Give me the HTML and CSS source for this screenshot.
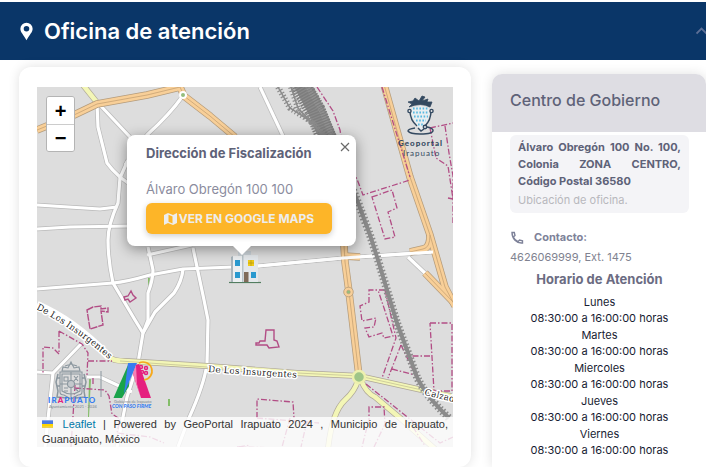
FILE: index.html
```html
<!DOCTYPE html>
<html lang="es">
<head>
<meta charset="utf-8">
<meta name="viewport" content="width=device-width, initial-scale=1">
<title>Oficina de atención</title>
<link rel="stylesheet" href="styles.css">
</head>
<body>
<button class="section-head" type="button" aria-expanded="true">
  <svg class="pin" viewBox="0 0 14 19" aria-hidden="true"><path fill="#fff" fill-rule="evenodd" d="M7 0a6.600 6.600 0 0 0-6.600 6.600C.4 10.400 3.600 12.600 7 19c3.400-6.400 6.600-8.600 6.600-12.400A6.600 6.600 0 0 0 7 0zM7 3.600a3 3 0 1 1 0 6 3 3 0 0 1 0-6z"/></svg>
  <span class="section-title">Oficina de atención</span>
  <svg class="chevron" viewBox="0 0 10 8" aria-hidden="true"><path d="M0.500 6.500L5.500 1.500L10.500 6.500" fill="none" stroke="#5d6f96" stroke-width="1.800"/></svg>
</button>
<main class="layout">
  <section class="map-card">
    <div class="map">
      <svg class="tiles" viewBox="37 87 416 360" preserveAspectRatio="xMidYMid slice" aria-label="Mapa de Irapuato">
        <defs>
          <path id="insurgentes-west" d="M36 309Q72 327 111 361"/>
          <path id="insurgentes" d="M208 372L300 378"/>
          <path id="calzada" d="M424 395L462 404"/>
          <g id="white-roads" fill="none" stroke-linejoin="round">
            <path d="M37 205L100 209L117 207"/>
            <path d="M37 229L70 227L130 226"/>
            <path d="M37 289L113 283Q126 282 150 275L183 269L233 267L258 266L343 258L433 252"/>
            <path d="M97 104L98 127L107 163Q112 170 120 177L128 183"/>
            <path d="M128 160L120 178L118 203Q108 225 108 240Q108 260 113 283L135 320L143 333"/>
            <path d="M99 104L130 137"/>
            <path d="M182 97Q170 114 147 135L125 165"/>
            <path d="M148 247L153 270Q153 280 148 293L148 320L143 333L138 363L127 397L117 447"/>
            <path d="M183 269Q182 281 174 293L155 312L143 333"/>
            <path d="M193 248L204 300L208 320L207 364Q204 385 189 418L178 447"/>
            <path d="M147 255L192 245"/>
            <path d="M37 372L53 373L82 343"/>
            <path d="M53 373L45 447"/>
            <path d="M87 377H100L132 392"/>
            <path d="M260 87L283 136"/>
            <path d="M408 257L426 274"/>
          </g>
          <g id="orange-roads" fill="none" stroke-linejoin="round">
            <path d="M37 130L74 115L97 104L147 95L180 87L184 96L210 116L235 137"/>
            <path d="M344 245L345 262L349 292L359 376"/>
            <path d="M344 256L360 257"/>
            <path d="M383 81L410 177L430 235L445 287L455 306"/>
            <path d="M430 235Q430 248 423 249L410 252"/>
            <path d="M425 273L455 304"/>
          </g>
          <g id="yellow-roads" fill="none">
            <path d="M83 85L99 105"/>
            <path d="M109 357Q113 361 125 361L207 366L297 373L359 376L422 390L455 397"/>
            <path d="M358 380Q355 391 345 400Q332 412 328 449"/>
            <path d="M361 380Q366 393 375 397L400 418L435 449"/>
          </g>
          <path id="railway" d="M349 180L359 205L370 235L378 260L397 323L417 377Q425 395 449 418"/>
        </defs>
        <path fill="#dddddd" d="M37 87h416v360H37z"/>
        <path d="M148 278h3l-1 14h-2zM89 379h2l-2 38h-1zM168 399h2v7h-2z" fill="#83bd68"/>
        <g stroke="#b9b9b9" stroke-width="4.600"><use href="#white-roads"/></g>
        <g stroke="#ffffff" stroke-width="3.200"><use href="#white-roads"/></g>
        <path d="M37 305Q73 320 109 357" fill="none" stroke="#fff" stroke-width="8"/>
        <g stroke="#aea798" stroke-width="6"><use href="#yellow-roads"/></g>
        <g stroke="#f3f6b6" stroke-width="4.600"><use href="#yellow-roads"/></g>
        <path d="M120 361L207 367L297 373L359 376L422 390" fill="none" stroke="#c5c395" stroke-width=".8"/>
        <g stroke="#b59c7b" stroke-width="7.500"><use href="#orange-roads"/></g>
        <g stroke="#f8cf98" stroke-width="6"><use href="#orange-roads"/></g>
        <g stroke="#c6a273" stroke-width=".8"><use href="#orange-roads"/></g>
        <path d="M258 266L343 258L433 252" fill="none" stroke="#fff" stroke-width="3"/>
        <circle cx="348.500" cy="292" r="4.800" fill="#f8cf98" stroke="#b59c7b" stroke-width=".8"/>
        <circle cx="348.500" cy="292" r="1.800" fill="#94be7d" stroke="#b59c7b" stroke-width=".6"/>
        <circle cx="183" cy="95" r="3" fill="#94be7d" stroke="#fff" stroke-width="2"/>
        <circle cx="359" cy="377" r="6" fill="#9fc588" stroke="#edf0ae" stroke-width="2.500"/>
        <g fill="none" stroke="#b24d85" stroke-width="1.300" stroke-dasharray="6 2 1.500 2">
          <path d="M317 87L333 111L340 130L345 160L357 179L363 195L410 180"/>
          <path d="M382 87L410 177"/>
          <path d="M372 197L392 190L397 208L388 212L395 237L385 239Z"/>
          <path d="M430 128L453 123M445 126L449 153L453 176L453 223M430 128L436 158L448 166L453 199M448 198L453 199"/>
          <path d="M385 290H369V302L360 306L362 321L376 318L374 327L365 328L369 337L382 333L384 338L393 336L385 311L378 290"/>
          <path d="M385 290L396 338L382 378M401 345L388 378M401 345L415 374M392 369L415 375M430 356H412M430 323H452V391H434L430 323"/>
          <path d="M257 418V399L293 402L294 418M257 418L319 423M237 447L282 448M290 418L282 447M307 421L301 447"/>
          <path d="M366 384L440 443L453 437M369 424V407H384L385 424L374 447M367 427L362 447M413 427L425 446"/>
          <path d="M59 331V354L53 348L43 347V373M59 331L82 344L88 353L87 375M88 361L112 361M75 388L105 390L109 396L112 414L120 419L117 433L150 437L164 443M75 385L71 447M93 378V386M239 447L250 445"/>
        </g>
        <g fill="none" stroke="#b24d85" stroke-width="1.400">
          <path d="M87 310L93 307L101 306V309L108 308V312L101 311L103 325L90 329Z" stroke-dasharray="7 1"/>
          <path d="M256 343H259L260 341H265L266 330H274V340L277 341L279 347L269 348L267 345H256Z"/>
          <path d="M124 297L128 296L131 291L133 295L136 298L130 302L128 299L125 300Z"/>
        </g>
        <g fill="none" stroke="#8b8b8b">
          <path d="M302 84L316 110L330 142" stroke-width="17"/>
          <path d="M300 84L315 110L328 142" stroke="#7d7d7d" stroke-width="21" stroke-dasharray="1.500 1.200"/>
          <path d="M306 84L322 112L334 142" stroke="#939393" stroke-width="5" stroke-dasharray="1 1.500"/>
          <path d="M278 87L290 108L312 122L326 140M291 87L298 108L325 137" stroke-width="1.500"/>
          <path d="M278 87L290 108L312 122L326 140M291 87L298 108L325 137" stroke-width="6" stroke-dasharray="1.200 2.200"/>
          <use href="#railway" stroke-width="4"/>
          <use href="#railway" stroke-width="8" stroke-dasharray="1.500 2.200"/>
        </g>
        <g class="street">
          <text><textPath href="#insurgentes-west">De Los Insurgentes</textPath></text>
          <text><textPath href="#insurgentes">De Los Insurgentes</textPath></text>
          <text><textPath href="#calzada">Calzad</textPath></text>
        </g>
        <!-- office building marker -->
        <g>
          <path d="M229 282.500h32" stroke="#527d60" stroke-width="1.200"/>
          <path d="M231 257l2-1v26h-2z" fill="#a9b5bc"/>
          <path d="M233 256h9v26h-9z" fill="#eceff1"/>
          <path d="M238 251h13v5h-13z" fill="#c9d1d6"/>
          <path d="M242 255h16v27h-16z" fill="#e4e8eb"/><path d="M242 255h1.500v27H242z" fill="#b9c3c9"/>
          <path d="M235 260h5v6h-5zM235 272h5v6h-5zM251 272h5v6h-5z" fill="#2999cf"/>
          <path d="M248 260h6v6h-6z" fill="#f0cb16"/><path d="M251 260v6M248 263h6" stroke="#b49a18" stroke-width=".7"/>
          <path d="M244 272h4.500v10H244z" fill="#806b59"/>
        </g>
        <!-- Geoportal logo -->
        <g fill="none" stroke="#334960" stroke-width="1.400">
          <path d="M411 109Q421 103 430 109Q430 120 421 130Q411 120 411 109Z" fill="#e9eef1" stroke="none"/>
          <path d="M409 107L412 104L408 102L413 101L415 98L419 101L422 96L425 97L422 101L428 99L427 102L432 102L430 107Q421 102 409 107Z" fill="#334960" stroke-width=".8"/>
          <path d="M410 111Q410 120 417 126M431 111Q431 120 425 126M415 128Q408 129 408 131Q410 134 420 134Q434 134 433 130Q432 128 427 127M418 128L421 131L424 129"/>
          <path d="M413 108.500h16M413 112.500h16M414 116.500h14M416 120.500h10M418 124.500h6" stroke="#59b9e2" stroke-width="2" stroke-dasharray="1.600 1.600"/>
          <circle cx="409.500" cy="111" r="1.600" fill="#e5e5e5"/><circle cx="431.500" cy="111" r="1.600" fill="#e5e5e5"/><circle cx="425" cy="127" r="1.700" fill="#e5e5e5"/>
        </g>
        <text class="geo geo-bold" x="398" y="146">Geoportal</text>
        <text class="geo" x="403" y="156">Irapuato</text>
        <!-- municipal crest and administration logo -->
        <g fill="none" stroke="#8a969e" stroke-width="1.100">
          <path d="M60 372h22v20q0 3-4 3l-7 4-7-4q-4 0-4-3zM71 372v26M60 384h22M62 374h18v17q-9 6-18 0z"/>
          <path d="M62 371l1-4 5 1 3-6 3 6 5-1 1 4zM65 366l6-2 6 2"/>
          <path d="M58 374l-2 8 2 9-1 6 10 1M84 374l2 8-2 9 1 6-10 1M57 378h3M57 386h3M82 378h3M82 386h3" stroke-width="1.500"/>
          <path d="M64 377h4v4h-4zM74 376l4 5M78 376l-4 5M64 388h4M64 391h4M74 388l4 3"/>
          <circle cx="71" cy="384" r="3.500" fill="#c3c8cc"/>
          <path d="M101 371v26" stroke-width="1"/>
        </g>
        <path d="M128 365L129 386L122 398H113.500Z" fill="#1aa34a"/>
        <path d="M128 363h9L124 394Z" fill="#377df0"/>
        <path d="M136 365L139 364L151 398H141L133 374Z" fill="#e5207f"/><path d="M136 365L133 374L141 398L137 384Z" fill="#f582b6"/>
        <path d="M139 363A9 9 0 1 1 144 380" fill="none" stroke="#f6a91b" stroke-width="1.700"/>
        <g fill="none" stroke="#e5207f" stroke-width="1.500"><circle cx="141" cy="367" r="1.500"/><circle cx="146" cy="368" r="1.500"/><circle cx="142" cy="372" r="1.500"/><circle cx="146" cy="373" r="1.500"/></g>
        <text class="logo-name" x="48" y="403"><tspan>IR</tspan><tspan fill="#e5207f">A</tspan><tspan>PUATO</tspan></text>
        <text class="logo-small" x="49" y="408">Ayuntamiento 2021 - 2024</text>
        <text class="logo-small" x="114" y="403">Gobierno de Irapuato</text>
        <text class="logo-slogan" x="112" y="408">CON PASO FIRME</text>
      </svg>
      <div class="zoom-control">
        <button type="button" aria-label="Acercar">+</button>
        <button type="button" aria-label="Alejar">−</button>
      </div>
      <div class="popup">
        <button class="popup-close" type="button" aria-label="Cerrar"><svg viewBox="0 0 10 10"><path d="M1 1l8 8M9 1l-8 8" stroke="#696969" stroke-width="1.200"/></svg></button>
        <h2>Dirección de Fiscalización</h2>
        <p>Álvaro Obregón 100 100</p>
        <a class="maps-link" href="#"><svg viewBox="0 0 13 12" aria-hidden="true"><path fill="#ededed" fill-rule="evenodd" d="M0 2L4 0l5 2 4-2v10l-4 2-5-2-4 2zM4.500 1.800v7l4 1.600v-7z"/></svg>VER EN GOOGLE MAPS</a>
      </div>
      <div class="attribution"><svg viewBox="0 0 12 8" aria-hidden="true"><path fill="#4c7be1" d="M0 0h12v4H0z"/><path fill="#ffd500" d="M0 4h12v3H0z"/><path fill="#e0bc00" d="M0 7h12v1H0z"/></svg> <a href="#">Leaflet</a> | Powered by GeoPortal Irapuato 2024 , Municipio de Irapuato, Guanajuato, México</div>
    </div>
  </section>
  <aside class="office">
    <h2 class="office-title">Centro de Gobierno</h2>
    <div class="office-body">
      <div class="address">
        <strong>Álvaro Obregón 100 No. 100, Colonia ZONA CENTRO, Código Postal 36580</strong>
        <span>Ubicación de oficina.</span>
      </div>
      <div class="contact">
        <svg viewBox="0 0 14 14" aria-hidden="true"><path d="M2 1.500H4.300L5 4.500L3.300 6Q5 9.500 8 10.700L9.500 9L12.500 9.700V12Q8 12.500 5 9.300T2 1.500Z" fill="none" stroke="#7e8299" stroke-width="1.400"/></svg>
        <b>Contacto:</b>
      </div>
      <p class="phone">4626069999, Ext. 1475</p>
      <h3>Horario de Atención</h3>
      <dl class="hours">
        <dt>Lunes</dt><dd>08:30:00 a 16:00:00 horas</dd>
        <dt>Martes</dt><dd>08:30:00 a 16:00:00 horas</dd>
        <dt>Miercoles</dt><dd>08:30:00 a 16:00:00 horas</dd>
        <dt>Jueves</dt><dd>08:30:00 a 16:00:00 horas</dd>
        <dt>Viernes</dt><dd>08:30:00 a 16:00:00 horas</dd>
      </dl>
    </div>
  </aside>
</main>
</body>
</html>
```
FILE: styles.css
```css
* { box-sizing: border-box; }
body {
  margin: 0;
  padding-top: 2px;
  background: #fff;
  font-family: Inter, sans-serif;
  font-size: 11px;
  color: #181c32;
}
h2, h3, p, dl, dd { margin: 0; }
button { font: inherit; border: 0; padding: 0; cursor: pointer; }

.section-head {
  display: flex;
  align-items: center;
  width: 100%;
  height: 58px;
  padding-left: 20px;
  background: #0a3668;
  color: #fff;
}
.pin { width: 13px; height: 19px; margin-right: 11px; }
.section-title { font-size: 22px; font-weight: 600; }
.chevron { width: 10px; height: 8px; margin-left: auto; }

.layout {
  display: grid;
  grid-template-columns: minmax(0, 452fr) minmax(0, 214fr);
  gap: 21px;
  padding: 7px 0 0 19px;
  align-items: start;
}
.map-card {
  padding: 20px 18px;
  border-radius: 12px;
  background: #fff;
  box-shadow: 0 0 12px rgba(0, 0, 0, .12);
}
.map { position: relative; height: 360px; overflow: hidden; }
.tiles { display: block; width: 100%; height: 100%; }
.street {
  font: 9px "DejaVu Serif", serif;
  fill: #222;
  stroke: #fff;
  stroke-width: 3px;
  stroke-linejoin: round;
  paint-order: stroke;
}
.geo { font: 8px Lato, sans-serif; fill: #334960; letter-spacing: 1px; }
.geo-bold { font-weight: 900; }
.logo-name { font: 900 8px Lato, sans-serif; fill: #377df0; letter-spacing: 1px; }
.logo-small { font: 4px Lato, sans-serif; fill: #7b858d; }
.logo-slogan { font: italic 900 5px Lato, sans-serif; fill: #377df0; }

.zoom-control {
  position: absolute;
  top: 9px;
  left: 9px;
  display: grid;
  border: 1px solid #b4b4b4;
  border-radius: 3px;
  overflow: hidden;
}
.zoom-control button {
  width: 27px;
  height: 27px;
  background: #fff;
  color: #000;
  font: bold 20px/26px "Liberation Sans", sans-serif;
}
.zoom-control button + button { border-top: 1px solid #ccc; }

.popup {
  position: absolute;
  top: 48px;
  left: 90px;
  width: 229px;
  padding: 9px 19px 12px;
  border-radius: 8px;
  background: #fff;
  box-shadow: 0 3px 14px rgba(0, 0, 0, .4);
}
.popup::after {
  content: "";
  position: absolute;
  top: 100%;
  left: 50%;
  margin-left: -9px;
  border: 9px solid transparent;
  border-top-color: #fff;
  border-bottom: 0;
}
.popup h2 { font-size: 13px; line-height: 18px; font-weight: 700; color: #5e6278; }
.popup p { margin: 18px 0 5px; font-size: 13px; line-height: 18px; color: #8b8c9e; }
.popup-close {
  position: absolute;
  top: 6px;
  right: 5px;
  width: 12px;
  height: 12px;
  background: none;
}
.popup-close svg { display: block; width: 10px; height: 10px; margin: 1px; }
.maps-link {
  display: flex;
  align-items: center;
  justify-content: center;
  gap: 2px;
  max-width: 186px;
  height: 31px;
  border-radius: 6px;
  background: #fdb528;
  color: #ededed;
  font-size: 12px;
  font-weight: 700;
  text-decoration: none;
  white-space: nowrap;
  box-shadow: 0 2px 6px rgba(0, 0, 0, .2);
}
.maps-link svg { width: 13px; height: 12px; }
.attribution {
  position: absolute;
  inset: auto 0 0;
  padding: 0 5px;
  background: rgba(255, 255, 255, .8);
  color: #333;
  font: 11px/15px "Liberation Sans", sans-serif;
  text-align: justify;
}
.attribution a { color: #0078a8; text-decoration: none; }
.attribution svg { width: 11px; height: 8px; margin-right: 2px; }

.office {
  margin-top: 7px;
  border-radius: 10px 10px 0 0;
  background: #fff;
  box-shadow: 0 0 12px rgba(0, 0, 0, .12);
  overflow: hidden;
}
.office-title {
  padding: 14px 18px 20px;
  background: #dedde3;
  color: #5e6278;
  font-size: 16px;
  line-height: 24px;
  font-weight: 500;
}
.office-body { padding: 3px 17px 8px 18px; }
.address {
  padding: 4px 8px;
  border-radius: 6px;
  background: #f4f4f7;
  line-height: 17px;
}
.address strong { display: block; font-weight: 700; color: #5e6278; text-align: justify; }
.address span { display: block; margin-top: 2px; color: #b8b8bd; }
.contact { display: flex; align-items: center; gap: 10px; margin-top: 16px; line-height: 17px; color: #7e8299; }
.contact svg { width: 14px; height: 14px; }
.contact b { font-weight: 700; }
.phone { margin-top: 3px; line-height: 17px; color: #808290; }
.office h3 { margin-top: 4px; text-align: center; font-size: 13px; line-height: 18px; font-weight: 700; color: #6b6c82; }
.hours { margin-top: 6px; text-align: center; }
.hours dt { line-height: 16px; }
.hours dd { line-height: 17px; }
```
